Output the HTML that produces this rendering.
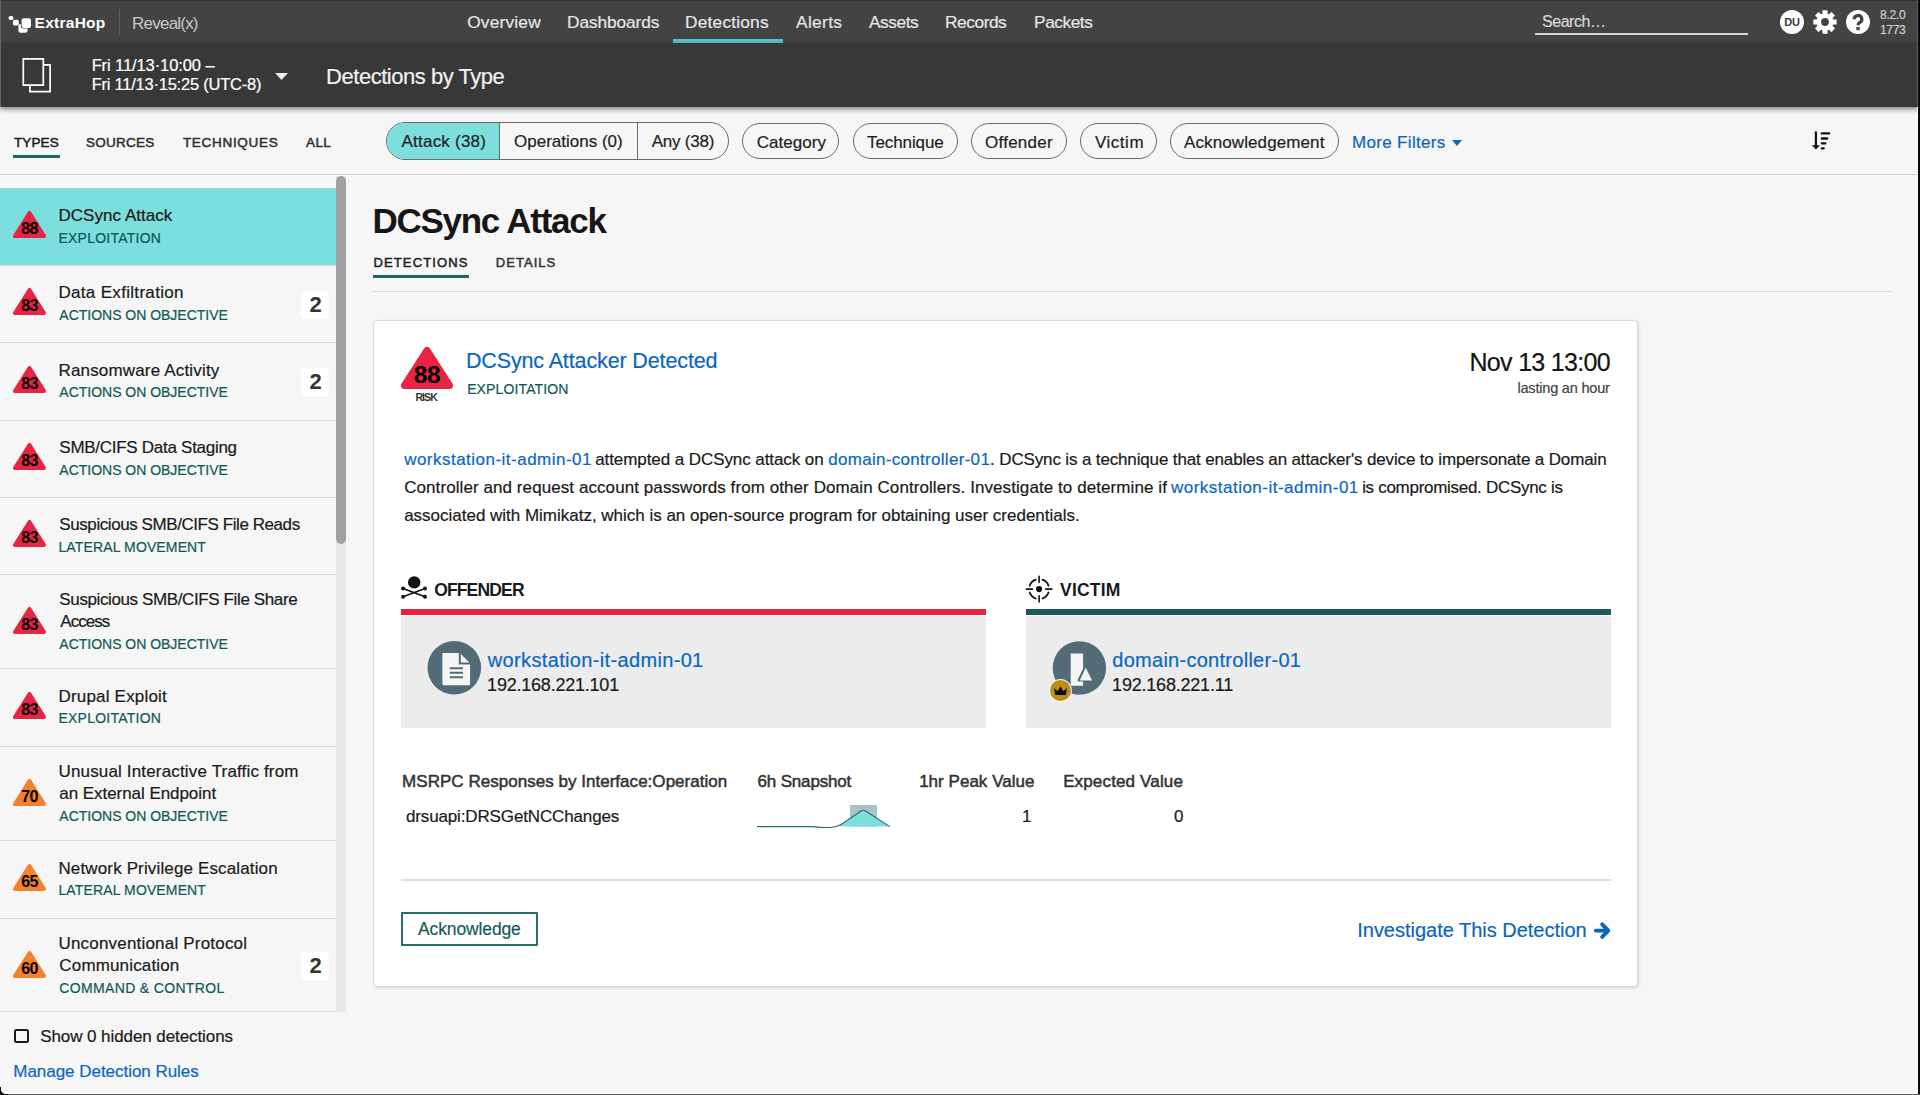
<!DOCTYPE html>
<html><head><meta charset="utf-8">
<style>
*{margin:0;padding:0;box-sizing:border-box}
html,body{width:1920px;height:1095px;overflow:hidden;background:#f6f6f6;font-family:"Liberation Sans",sans-serif;color:#222}
.a{position:absolute}
.t{position:absolute;white-space:nowrap;line-height:1;-webkit-text-stroke:0.2px currentColor}
.t[style*="bold"]{-webkit-text-stroke:0}
</style></head>
<body>
<div class="a" style="left:0px;top:0px;width:1920px;height:43px;background:#434343"></div>
<svg class="a" style="left:0;top:0" width="40" height="43" viewBox="0 0 40 43">
<rect x="8.7" y="15.9" width="4.6" height="4.2" rx="1.6" fill="#fff"/>
<rect x="13" y="19.8" width="5.8" height="5.8" rx="1.6" fill="#fff"/>
<rect x="18.4" y="24" width="9.2" height="8.8" rx="2.2" fill="#fff"/>
<rect x="20.8" y="17.6" width="11" height="11" rx="2.4" fill="#434343"/>
<rect x="21.6" y="18.2" width="9.4" height="9.7" rx="2.2" fill="#fff"/>
</svg>
<div class="t" id=logo style="left:34.54px;top:15.18px;font-size:15.5px;color:#fff;font-weight:bold;letter-spacing:0.266px">ExtraHop</div>
<div class="a" style="left:119px;top:9px;width:1px;height:26px;background:#5e5e5e"></div>
<div class="t" id=reveal style="left:132.1px;top:14.61px;font-size:17px;color:#c8c8c8;letter-spacing:-0.788px;-webkit-text-stroke:0">Reveal(x)</div>
<div class="t" id=navOverview style="left:467.18px;top:13.76px;font-size:17.3px;color:#e6e6e6;letter-spacing:0.206px">Overview</div>
<div class="t" id=navDashboards style="left:567.1px;top:13.76px;font-size:17.3px;color:#e6e6e6;letter-spacing:-0.1px">Dashboards</div>
<div class="t" id=navDetections style="left:685.1px;top:13.76px;font-size:17.3px;color:#e6e6e6;letter-spacing:0.2px">Detections</div>
<div class="t" id=navAlerts style="left:796.0px;top:13.76px;font-size:17.3px;color:#e6e6e6;letter-spacing:0.36px">Alerts</div>
<div class="t" id=navAssets style="left:869.0px;top:13.76px;font-size:17.3px;color:#e6e6e6;letter-spacing:-0.432px">Assets</div>
<div class="t" id=navRecords style="left:945.1px;top:13.76px;font-size:17.3px;color:#e6e6e6;letter-spacing:-0.45px">Records</div>
<div class="t" id=navPackets style="left:1034.1px;top:13.76px;font-size:17.3px;color:#e6e6e6;letter-spacing:-0.45px">Packets</div>
<div class="a" style="left:673px;top:39px;width:110px;height:4px;background:#55c6ca"></div>
<div class="t" id=search style="left:1542.0px;top:13.66px;font-size:16px;color:#d8d8d8;letter-spacing:-0.45px">Search…</div>
<div class="a" style="left:1535px;top:33px;width:213px;height:2px;background:#d6d6d6"></div>
<div class="a" style="left:1780px;top:10px;width:24px;height:24px;border-radius:50%;background:#fff;font-size:11px;font-weight:bold;color:#3a3a3a;text-align:center;line-height:24px;letter-spacing:-0.3px">DU</div>
<svg class="a" style="left:1812px;top:9px" width="26" height="26" viewBox="-13 -13 26 26">
<g fill="#fff"><circle r="8.6"/>
<rect x="-2.6" y="-11.7" width="5.2" height="23.4" rx="0.6"/>
<rect x="-2.6" y="-11.7" width="5.2" height="23.4" rx="0.6" transform="rotate(45)"/>
<rect x="-2.6" y="-11.7" width="5.2" height="23.4" rx="0.6" transform="rotate(90)"/>
<rect x="-2.6" y="-11.7" width="5.2" height="23.4" rx="0.6" transform="rotate(135)"/></g>
<circle r="3.9" fill="#434343"/>
</svg>
<svg class="a" style="left:1846px;top:10px" width="24" height="24" viewBox="0 0 24 24">
<circle cx="12" cy="12" r="12" fill="#fff"/>
<path d="M8.2 9.3a3.8 3.7 0 1 1 5.7 3.1c-1.2.8-1.9 1.3-1.9 2.9" stroke="#434343" stroke-width="3.2" fill="none"/>
<rect x="10.3" y="17" width="3.4" height="3.2" fill="#434343"/>
</svg>
<div class="t" id=ver1 style="left:1880.0px;top:9.14px;font-size:12px;color:#cfcfcf;letter-spacing:-0.27px">8.2.0</div>
<div class="t" id=ver2 style="left:1879.9px;top:23.64px;font-size:12px;color:#cfcfcf;letter-spacing:-0.3px">1773</div>
<div class="a" style="left:0px;top:43px;width:1920px;height:64px;background:#383838;box-shadow:0 2px 5px rgba(0,0,0,.5)"></div>
<svg class="a" style="left:0;top:43px" width="60" height="63" viewBox="0 43 60 63">
<path d="M29.9 64.8H50.1V91.6H29.9z" fill="none" stroke="#fff" stroke-width="1.7"/>
<path d="M23.3 58.8H43.3V85.1H23.3z" fill="#383838" stroke="#fff" stroke-width="1.7"/>
</svg>
<div class="t" id=date1 style="left:91.64px;top:57.43px;font-size:16.5px;color:#fff;letter-spacing:-0.09px">Fri 11/13·10:00 –</div>
<div class="t" id=date2 style="left:91.64px;top:75.73px;font-size:16.5px;color:#fff;letter-spacing:-0.229px">Fri 11/13·15:25 (UTC-8)</div>
<svg class="a" style="left:275px;top:73px" width="13" height="7" viewBox="0 0 13 7"><path d="M0 0h13L6.5 7z" fill="#eee"/></svg>
<div class="t" id=dbt style="left:326.1px;top:65.78px;font-size:22px;color:#f2f2f2;letter-spacing:-0.476px">Detections by Type</div>
<div class="a" style="left:0px;top:174px;width:1920px;height:1px;background:#d4d4d4"></div>
<div class="t" id=ftTYPES style="left:13.9px;top:135.57px;font-size:13.5px;color:#1e1e1e;-webkit-text-stroke:0.5px currentColor;letter-spacing:0.13px">TYPES</div>
<div class="t" id=ftSOURCES style="left:86.0px;top:135.57px;font-size:13.5px;color:#2e2e2e;-webkit-text-stroke:0.5px currentColor;letter-spacing:0.25px">SOURCES</div>
<div class="t" id=ftTECHNIQUES style="left:182.9px;top:135.57px;font-size:13.5px;color:#2e2e2e;-webkit-text-stroke:0.5px currentColor;letter-spacing:0.7px">TECHNIQUES</div>
<div class="t" id=ftALL style="left:306.0px;top:135.57px;font-size:13.5px;color:#2e2e2e;-webkit-text-stroke:0.5px currentColor;letter-spacing:0.4px">ALL</div>
<div class="a" style="left:13px;top:155px;width:47px;height:3px;background:#1f6765"></div>
<div class="a" style="left:386px;top:122px;width:343px;height:38px;border:1px solid #6a6a6a;border-radius:19px;overflow:hidden;background:#f6f6f6">
<div class="a" style="left:0;top:0;width:113px;height:36px;background:#7ddede;border-right:1px solid #6a6a6a"></div>
<div class="a" style="left:250px;top:0;width:1px;height:36px;background:#6a6a6a"></div>
</div>
<div class="t" id=pAttack style="left:401.54px;top:132.61px;font-size:17px;color:#1e1e1e;letter-spacing:0.216px">Attack (38)</div>
<div class="t" id=pOps style="left:514.0px;top:132.61px;font-size:17px;color:#1e1e1e">Operations (0)</div>
<div class="t" id=pAny style="left:651.72px;top:132.61px;font-size:17px;color:#1e1e1e;letter-spacing:-0.231px">Any (38)</div>
<div class="a" style="left:742px;top:123px;width:97px;height:36px;border:1px solid #6a6a6a;border-radius:18px"></div>
<div class="t" id=pCategory style="left:756.64px;top:134.01px;font-size:17px;color:#1e1e1e;letter-spacing:0.051px">Category</div>
<div class="a" style="left:853px;top:123px;width:105px;height:36px;border:1px solid #6a6a6a;border-radius:18px"></div>
<div class="t" id=pTechnique style="left:867.0px;top:134.01px;font-size:17px;color:#1e1e1e;letter-spacing:-0.09px">Technique</div>
<div class="a" style="left:971px;top:123px;width:96px;height:36px;border:1px solid #6a6a6a;border-radius:18px"></div>
<div class="t" id=pOffender style="left:985.0px;top:134.01px;font-size:17px;color:#1e1e1e;letter-spacing:0.257px">Offender</div>
<div class="a" style="left:1080px;top:123px;width:77px;height:36px;border:1px solid #6a6a6a;border-radius:18px"></div>
<div class="t" id=pVictim style="left:1094.9px;top:134.01px;font-size:17px;color:#1e1e1e;letter-spacing:0.54px">Victim</div>
<div class="a" style="left:1170px;top:123px;width:169px;height:36px;border:1px solid #6a6a6a;border-radius:18px"></div>
<div class="t" id=pAcknowledgement style="left:1184.0px;top:134.01px;font-size:17px;color:#1e1e1e;letter-spacing:0.103px">Acknowledgement</div>
<div class="t" id=more style="left:1352.1px;top:134.01px;font-size:17px;color:#0b66c1;letter-spacing:0.311px">More Filters</div>
<svg class="a" style="left:1452px;top:140px" width="10" height="6" viewBox="0 0 10 6"><path d="M0 0h10L5 6z" fill="#0b66c1"/></svg>
<svg class="a" style="left:1790px;top:120px" width="60" height="45" viewBox="1790 120 60 45">
<path d="M1815.9 132.3V147" stroke="#111" stroke-width="2.2" stroke-linecap="round"/>
<path d="M1812.4 145.6h7l-3.5 3.6z" fill="#111" stroke="#111" stroke-width="0.6" stroke-linejoin="round"/>
<path d="M1821.8 133.4h7.4M1821.8 138.5h5.4M1821.8 143.4h3.5M1821.8 148.4h1.9" stroke="#111" stroke-width="2.3" stroke-linecap="round"/>
</svg>
<div class="a" style="left:0px;top:188px;width:336px;height:77px;background:#7ddede"></div>
<div class="a" style="left:0px;top:265px;width:336px;height:1px;background:#dadada"></div>
<div class="t" id=s0t0 style="left:58.46px;top:207.31px;font-size:17px;color:#1a1a1a;letter-spacing:0.045px">DCSync Attack</div>
<div class="t" id=s0c style="left:58.46px;top:231.15px;font-size:14px;color:#0f5553;letter-spacing:0.245px">EXPLOITATION</div>
<svg class="a" style="left:13px;top:211.3px" width="33" height="27" viewBox="0 0 33 27"><polygon points="16.5,2.0 2.0,25.0 31.0,25.0" fill="#e92443" stroke="#e92443" stroke-width="4" stroke-linejoin="round"/></svg>
<div class="t" style="left:13px;width:33px;text-align:center;top:221.46px;font-size:16px;font-weight:bold;color:#000;letter-spacing:-0.7px">88</div>
<div class="a" style="left:0px;top:342px;width:336px;height:1px;background:#dadada"></div>
<div class="t" id=s1t0 style="left:58.46px;top:284.31px;font-size:17px;color:#1a1a1a;letter-spacing:0.315px">Data Exfiltration</div>
<div class="t" id=s1c style="left:59.36px;top:308.15px;font-size:14px;color:#0f5957;letter-spacing:-0.019px">ACTIONS ON OBJECTIVE</div>
<svg class="a" style="left:13px;top:288.3px" width="33" height="27" viewBox="0 0 33 27"><polygon points="16.5,2.0 2.0,25.0 31.0,25.0" fill="#e92443" stroke="#e92443" stroke-width="4" stroke-linejoin="round"/></svg>
<div class="t" style="left:13px;width:33px;text-align:center;top:298.46px;font-size:16px;font-weight:bold;color:#000;letter-spacing:-0.7px">83</div>
<div class="a" style="left:301px;top:291px;width:28px;height:28px;background:#fff;border-radius:3px"></div>
<div class="t" id=s1b style="left:309.48px;top:293.98px;font-size:22px;color:#333;font-weight:bold">2</div>
<div class="a" style="left:0px;top:420px;width:336px;height:1px;background:#dadada"></div>
<div class="t" id=s2t0 style="left:58.46px;top:361.61px;font-size:17px;color:#1a1a1a;letter-spacing:0.17px">Ransomware Activity</div>
<div class="t" id=s2c style="left:59.36px;top:385.45px;font-size:14px;color:#0f5957;letter-spacing:-0.019px">ACTIONS ON OBJECTIVE</div>
<svg class="a" style="left:13px;top:365.6px" width="33" height="27" viewBox="0 0 33 27"><polygon points="16.5,2.0 2.0,25.0 31.0,25.0" fill="#e92443" stroke="#e92443" stroke-width="4" stroke-linejoin="round"/></svg>
<div class="t" style="left:13px;width:33px;text-align:center;top:375.76px;font-size:16px;font-weight:bold;color:#000;letter-spacing:-0.7px">83</div>
<div class="a" style="left:301px;top:368px;width:28px;height:28px;background:#fff;border-radius:3px"></div>
<div class="t" id=s2b style="left:309.48px;top:371.38px;font-size:22px;color:#333;font-weight:bold">2</div>
<div class="a" style="left:0px;top:497px;width:336px;height:1px;background:#dadada"></div>
<div class="t" id=s3t0 style="left:59.36px;top:438.91px;font-size:17px;color:#1a1a1a;letter-spacing:-0.279px">SMB/CIFS Data Staging</div>
<div class="t" id=s3c style="left:59.36px;top:462.75px;font-size:14px;color:#0f5957;letter-spacing:-0.019px">ACTIONS ON OBJECTIVE</div>
<svg class="a" style="left:13px;top:442.9px" width="33" height="27" viewBox="0 0 33 27"><polygon points="16.5,2.0 2.0,25.0 31.0,25.0" fill="#e92443" stroke="#e92443" stroke-width="4" stroke-linejoin="round"/></svg>
<div class="t" style="left:13px;width:33px;text-align:center;top:453.06px;font-size:16px;font-weight:bold;color:#000;letter-spacing:-0.7px">83</div>
<div class="a" style="left:0px;top:574px;width:336px;height:1px;background:#dadada"></div>
<div class="t" id=s4t0 style="left:59.36px;top:516.31px;font-size:17px;color:#1a1a1a;letter-spacing:-0.428px">Suspicious SMB/CIFS File Reads</div>
<div class="t" id=s4c style="left:58.46px;top:540.15px;font-size:14px;color:#0f5957;letter-spacing:0.132px">LATERAL MOVEMENT</div>
<svg class="a" style="left:13px;top:520.3px" width="33" height="27" viewBox="0 0 33 27"><polygon points="16.5,2.0 2.0,25.0 31.0,25.0" fill="#e92443" stroke="#e92443" stroke-width="4" stroke-linejoin="round"/></svg>
<div class="t" style="left:13px;width:33px;text-align:center;top:530.46px;font-size:16px;font-weight:bold;color:#000;letter-spacing:-0.7px">83</div>
<div class="a" style="left:0px;top:668px;width:336px;height:1px;background:#dadada"></div>
<div class="t" id=s5t0 style="left:59.36px;top:590.81px;font-size:17px;color:#1a1a1a;letter-spacing:-0.385px">Suspicious SMB/CIFS File Share</div>
<div class="t" id=s5t1 style="left:60.26px;top:613.41px;font-size:17px;color:#1a1a1a;letter-spacing:-0.936px">Access</div>
<div class="t" id=s5c style="left:59.36px;top:637.35px;font-size:14px;color:#0f5957;letter-spacing:-0.019px">ACTIONS ON OBJECTIVE</div>
<svg class="a" style="left:13px;top:606.5px" width="33" height="27" viewBox="0 0 33 27"><polygon points="16.5,2.0 2.0,25.0 31.0,25.0" fill="#e92443" stroke="#e92443" stroke-width="4" stroke-linejoin="round"/></svg>
<div class="t" style="left:13px;width:33px;text-align:center;top:616.66px;font-size:16px;font-weight:bold;color:#000;letter-spacing:-0.7px">83</div>
<div class="a" style="left:0px;top:746px;width:336px;height:1px;background:#dadada"></div>
<div class="t" id=s6t0 style="left:58.46px;top:687.61px;font-size:17px;color:#1a1a1a;letter-spacing:0.194px">Drupal Exploit</div>
<div class="t" id=s6c style="left:58.46px;top:711.45px;font-size:14px;color:#0f5957;letter-spacing:0.245px">EXPLOITATION</div>
<svg class="a" style="left:13px;top:691.6px" width="33" height="27" viewBox="0 0 33 27"><polygon points="16.5,2.0 2.0,25.0 31.0,25.0" fill="#e92443" stroke="#e92443" stroke-width="4" stroke-linejoin="round"/></svg>
<div class="t" style="left:13px;width:33px;text-align:center;top:701.76px;font-size:16px;font-weight:bold;color:#000;letter-spacing:-0.7px">83</div>
<div class="a" style="left:0px;top:840px;width:336px;height:1px;background:#dadada"></div>
<div class="t" id=s7t0 style="left:58.46px;top:762.81px;font-size:17px;color:#1a1a1a;letter-spacing:0.163px">Unusual Interactive Traffic from</div>
<div class="t" id=s7t1 style="left:59.36px;top:785.41px;font-size:17px;color:#1a1a1a;letter-spacing:-0.057px">an External Endpoint</div>
<div class="t" id=s7c style="left:59.36px;top:809.35px;font-size:14px;color:#0f5957;letter-spacing:-0.019px">ACTIONS ON OBJECTIVE</div>
<svg class="a" style="left:13px;top:778.5px" width="33" height="27" viewBox="0 0 33 27"><polygon points="16.5,2.0 2.0,25.0 31.0,25.0" fill="#f7812b" stroke="#f7812b" stroke-width="4" stroke-linejoin="round"/></svg>
<div class="t" style="left:13px;width:33px;text-align:center;top:788.66px;font-size:16px;font-weight:bold;color:#000;letter-spacing:-0.7px">70</div>
<div class="a" style="left:0px;top:918px;width:336px;height:1px;background:#dadada"></div>
<div class="t" id=s8t0 style="left:58.46px;top:859.61px;font-size:17px;color:#1a1a1a;letter-spacing:0.14px">Network Privilege Escalation</div>
<div class="t" id=s8c style="left:58.46px;top:883.45px;font-size:14px;color:#0f5957;letter-spacing:0.132px">LATERAL MOVEMENT</div>
<svg class="a" style="left:13px;top:863.6px" width="33" height="27" viewBox="0 0 33 27"><polygon points="16.5,2.0 2.0,25.0 31.0,25.0" fill="#f7812b" stroke="#f7812b" stroke-width="4" stroke-linejoin="round"/></svg>
<div class="t" style="left:13px;width:33px;text-align:center;top:873.76px;font-size:16px;font-weight:bold;color:#000;letter-spacing:-0.7px">65</div>
<div class="a" style="left:0px;top:1011px;width:336px;height:1px;background:#dadada"></div>
<div class="t" id=s9t0 style="left:58.46px;top:934.81px;font-size:17px;color:#1a1a1a;letter-spacing:0.196px">Unconventional Protocol</div>
<div class="t" id=s9t1 style="left:59.36px;top:957.41px;font-size:17px;color:#1a1a1a;letter-spacing:0.15px">Communication</div>
<div class="t" id=s9c style="left:59.36px;top:981.35px;font-size:14px;color:#0f5957;letter-spacing:0.338px">COMMAND &amp; CONTROL</div>
<svg class="a" style="left:13px;top:950.5px" width="33" height="27" viewBox="0 0 33 27"><polygon points="16.5,2.0 2.0,25.0 31.0,25.0" fill="#f7812b" stroke="#f7812b" stroke-width="4" stroke-linejoin="round"/></svg>
<div class="t" style="left:13px;width:33px;text-align:center;top:960.66px;font-size:16px;font-weight:bold;color:#000;letter-spacing:-0.7px">60</div>
<div class="a" style="left:301px;top:952px;width:28px;height:28px;background:#fff;border-radius:3px"></div>
<div class="t" id=s9b style="left:309.48px;top:954.98px;font-size:22px;color:#333;font-weight:bold">2</div>
<div class="a" style="left:336px;top:176px;width:10px;height:835.5px;background:#e8e8e8"></div>
<div class="a" style="left:336px;top:176px;width:10px;height:368px;background:#a0a0a0;border-radius:5px"></div>
<div class="a" style="left:14px;top:1028.5px;width:14.5px;height:14.5px;border:2px solid #1a1a1a;border-radius:2.5px"></div>
<div class="t" id=show0 style="left:40.18px;top:1028.01px;font-size:17px;color:#1a1a1a;letter-spacing:-0.078px">Show 0 hidden detections</div>
<div class="t" id=manage style="left:13.32px;top:1063.11px;font-size:17px;color:#0b66c1;letter-spacing:-0.034px">Manage Detection Rules</div>
<div class="t" id=h1 style="left:372.38px;top:202.97px;font-size:35px;color:#161616;font-weight:bold;letter-spacing:-1.25px">DCSync Attack</div>
<div class="t" id=tabDet style="left:373.5px;top:255.90px;font-size:13px;color:#1e1e1e;-webkit-text-stroke:0.5px currentColor;letter-spacing:1.12px">DETECTIONS</div>
<div class="t" id=tabDetails style="left:495.82px;top:255.90px;font-size:13px;color:#333;-webkit-text-stroke:0.5px currentColor;letter-spacing:1.04px">DETAILS</div>
<div class="a" style="left:373px;top:275px;width:96px;height:3px;background:#1f6765"></div>
<div class="a" style="left:373px;top:291px;width:1518px;height:1px;background:#d9d9d9"></div>
<div class="a" style="left:373px;top:320px;width:1265px;height:667px;background:#fff;border:1px solid #dadada;border-radius:4px;box-shadow:1px 1px 3px rgba(0,0,0,.13)"></div>
<svg class="a" style="left:401px;top:347px" width="52" height="42" viewBox="0 0 52 42"><polygon points="26,3.5 3.5,38.5 48.5,38.5" fill="#e92443" stroke="#e92443" stroke-width="7" stroke-linejoin="round"/></svg>
<div class="t" style="left:401px;width:52px;text-align:center;top:362.86px;font-size:24.5px;font-weight:bold;color:#000;letter-spacing:-0.5px">88</div>
<div class="t" id=risk style="left:415.46px;top:392.01px;font-size:10.5px;color:#333;font-weight:bold;letter-spacing:-0.92px">RISK</div>
<div class="t" id=dTitle style="left:465.88px;top:351.30px;font-size:21.5px;color:#0b66c1;letter-spacing:-0.125px">DCSync Attacker Detected</div>
<div class="t" id=dCat style="left:467.14px;top:381.55px;font-size:14px;color:#0f5957;letter-spacing:0.131px">EXPLOITATION</div>
<div class="t" id=dDate style="left:1469.46px;top:349.84px;font-size:25px;color:#141414;letter-spacing:-0.682px">Nov 13 13:00</div>
<div class="t" id=dLast style="left:1517.46px;top:381.03px;font-size:14.5px;color:#444;letter-spacing:-0.193px">lasting an hour</div>
<div class="t" id=d0_0 style="left:404.18px;top:451.11px;font-size:17px;color:#0b66c1;letter-spacing:0.483px">workstation-it-admin-01</div>
<div class="t" id=d0_1 style="left:595.18px;top:451.11px;font-size:17px;color:#1a1a1a;letter-spacing:-0.077px"> attempted a DCSync attack on</div>
<div class="t" id=d0_2 style="left:828.18px;top:451.11px;font-size:17px;color:#0b66c1;letter-spacing:0.303px">domain-controller-01</div>
<div class="t" id=d0_3 style="left:990.1px;top:451.11px;font-size:17px;color:#1a1a1a;letter-spacing:-0.142px">. DCSync is a technique that enables an attacker&#39;s device to impersonate a Domain</div>
<div class="t" id=d1_0 style="left:404.18px;top:479.21px;font-size:17px;color:#1a1a1a;letter-spacing:0.079px">Controller and request account passwords from other Domain Controllers. Investigate to determine if</div>
<div class="t" id=d1_1 style="left:1171.0px;top:479.21px;font-size:17px;color:#0b66c1;letter-spacing:0.483px">workstation-it-admin-01</div>
<div class="t" id=d1_2 style="left:1362.14px;top:479.21px;font-size:17px;color:#1a1a1a;letter-spacing:-0.292px">is compromised. DCSync is</div>
<div class="t" id=d2_0 style="left:404.18px;top:507.01px;font-size:17px;color:#1a1a1a;letter-spacing:-0.012px">associated with Mimikatz, which is an open-source program for obtaining user credentials.</div>
<svg class="a" style="left:396px;top:570px" width="40" height="34" viewBox="396 570 40 34">
<circle cx="414.2" cy="582.4" r="6.2" fill="#111"/>
<path d="M403.1 588.5L425 596.7M403.1 596.7L425 588.5" stroke="#111" stroke-width="1.6"/>
<circle cx="403.1" cy="588.5" r="2" fill="#111"/><circle cx="425" cy="588.5" r="2" fill="#111"/>
<circle cx="403.1" cy="596.7" r="2" fill="#111"/><circle cx="425" cy="596.7" r="2" fill="#111"/>
</svg>
<div class="t" id=offHdr style="left:434.14px;top:581.69px;font-size:17.5px;color:#1a1a1a;font-weight:bold;letter-spacing:-0.834px">OFFENDER</div>
<div class="a" style="left:401px;top:609px;width:585px;height:6px;background:#e8233f"></div>
<div class="a" style="left:401px;top:616px;width:585px;height:112px;background:#ececec"></div>
<svg class="a" style="left:424px;top:636px" width="62" height="62" viewBox="424 636 62 62">
<circle cx="454.3" cy="667.7" r="26.8" fill="#526b76"/>
<path d="M442.4 654.2q0-1.2 1.2-1.2H458.8V664.6H470.1V684.1q0 1.2-1.2 1.2H443.6q-1.2 0-1.2-1.2z" fill="#f5f5f5"/>
<path d="M460.8 654.1L469.3 662.6H460.8z" fill="#f5f5f5"/>
<path d="M449.8 668.3H463M449.8 672.8H463M449.8 677.3H463" stroke="#526b76" stroke-width="2"/>
</svg>
<div class="t" id=offName style="left:487.82px;top:649.67px;font-size:20px;color:#0b66c1;letter-spacing:0.344px">workstation-it-admin-01</div>
<div class="t" id=offIp style="left:487.1px;top:675.56px;font-size:18px;color:#1a1a1a;letter-spacing:-0.219px">192.168.221.101</div>
<svg class="a" style="left:1020px;top:570px" width="40" height="36" viewBox="1020 570 40 36">
<circle cx="1039.1" cy="589.1" r="3.1" fill="#111"/>
<path d="M1039.1 576.3V582.5M1039.1 595.7V601.9M1026.3 589.1H1032.5M1045.7 589.1H1051.9" stroke="#111" stroke-width="1.6" stroke-linecap="round"/>
<g fill="none" stroke="#111" stroke-width="1.8" stroke-linecap="round">
<path d="M1029.7 585.7A10 10 0 0 1 1035.7 579.7"/>
<path d="M1042.5 579.7A10 10 0 0 1 1048.5 585.7"/>
<path d="M1048.5 592.5A10 10 0 0 1 1042.5 598.5"/>
<path d="M1035.7 598.5A10 10 0 0 1 1029.7 592.5"/>
</g>
</svg>
<div class="t" id=vicHdr style="left:1060.0px;top:581.69px;font-size:17.5px;color:#1a1a1a;font-weight:bold;letter-spacing:0.22px">VICTIM</div>
<div class="a" style="left:1026px;top:609px;width:585px;height:6px;background:#1b5a5a"></div>
<div class="a" style="left:1026px;top:616px;width:585px;height:112px;background:#ececec"></div>
<svg class="a" style="left:1044px;top:636px" width="68" height="68" viewBox="1044 636 68 68">
<circle cx="1079.4" cy="668" r="26.7" fill="#526b76"/>
<path d="M1070.7 653.4H1083.1V668.5L1077.8 679.5Q1077 681.5 1079 681.5H1083.1V685.7H1070.7z" fill="#f5f5f5"/>
<path d="M1085.8 667.7L1092.1 680.4H1079.7z" fill="#f5f5f5"/>
<circle cx="1060.5" cy="690.5" r="11.4" fill="#f4f6fa"/>
<circle cx="1060.5" cy="690.5" r="10.5" fill="#bb8e16"/>
<path d="M1054.2 688L1057.5 691.3L1060.4 686.6L1063.4 691.3L1066.8 688L1066 694.9H1055.1z" fill="#0a0a10"/>
</svg>
<div class="t" id=vicName style="left:1112.28px;top:649.67px;font-size:20px;color:#0b66c1;letter-spacing:0.275px">domain-controller-01</div>
<div class="t" id=vicIp style="left:1112.1px;top:675.56px;font-size:18px;color:#1a1a1a;letter-spacing:-0.208px">192.168.221.11</div>
<div class="t" id=th1 style="left:402.1px;top:772.61px;font-size:17px;color:#333;-webkit-text-stroke:0.5px currentColor;letter-spacing:0.029px">MSRPC Responses by Interface:Operation</div>
<div class="t" id=th2 style="left:757.5px;top:772.61px;font-size:17px;color:#333;-webkit-text-stroke:0.5px currentColor;letter-spacing:-0.162px">6h Snapshot</div>
<div class="t" id=th3 style="left:919.14px;top:772.61px;font-size:17px;color:#333;-webkit-text-stroke:0.5px currentColor;letter-spacing:0.028px">1hr Peak Value</div>
<div class="t" id=th4 style="left:1063.14px;top:772.61px;font-size:17px;color:#333;-webkit-text-stroke:0.5px currentColor;letter-spacing:0.152px">Expected Value</div>
<div class="t" id=tr1 style="left:405.96px;top:808.21px;font-size:17px;color:#1a1a1a;letter-spacing:-0.139px">drsuapi:DRSGetNCChanges</div>
<div class="t" id=tr2 style="left:1022.0px;top:808.21px;font-size:17px;color:#1a1a1a">1</div>
<div class="t" id=tr3 style="left:1174.0px;top:808.21px;font-size:17px;color:#1a1a1a">0</div>
<svg class="a" style="left:750px;top:800px" width="150" height="32" viewBox="750 800 150 32">
<rect x="850" y="805" width="27" height="21.6" fill="#aac2c5"/>
<path d="M839.5 826.6V825.6Q840.5 825 841.5 824.2L860.8 811.2Q863.3 809.4 865.8 811.2L889.8 826.6z" fill="#7ddede"/>
<path d="M757 826.6H812Q820 827.6 830 827.5Q836 827.4 841.5 824.2L860.8 811.2Q863.3 809.4 865.8 811.2L889.8 826.6" fill="none" stroke="#2f6b6b" stroke-width="1.1"/>
</svg>
<div class="a" style="left:401px;top:879px;width:1210px;height:2px;background:#dedede"></div>
<div class="a" style="left:401px;top:912px;width:137px;height:34px;border:2px solid #2c6c6b;border-radius:1px"></div>
<div class="t" id=ack style="left:418.0px;top:920.99px;font-size:17.5px;color:#145c5a;letter-spacing:-0.126px">Acknowledge</div>
<div class="t" id=inv style="left:1357.24px;top:920.27px;font-size:20px;color:#0b66c1;letter-spacing:-0.014px">Investigate This Detection</div>
<svg class="a" style="left:1592px;top:920px" width="20" height="20" viewBox="0 0 20 20"><path d="M3.8 10.6H15M10.2 4.3L16.3 10.6L10.2 16.9" stroke="#0b66c1" stroke-width="3.9" fill="none" stroke-linecap="round" stroke-linejoin="round"/></svg>
<div class="a" style="left:1917px;top:0px;width:1px;height:107px;background:#5c5c5c"></div>
<div class="a" style="left:0px;top:0px;width:1917px;height:1px;background:#333"></div>
<div class="a" style="left:0px;top:0px;width:1px;height:107px;background:#666"></div>
<div class="a" style="left:1917px;top:107px;width:1px;height:987px;background:#fdfdfd"></div>
<div class="a" style="left:1918px;top:0px;width:2px;height:1095px;background:#0a0a0a"></div>
<div class="a" style="left:0px;top:1093px;width:1917px;height:1px;background:#fdfdfd"></div>
<div class="a" style="left:0px;top:1094px;width:1920px;height:1px;background:#5a5a5a"></div>
<svg class="a" style="left:0;top:1087px" width="8" height="8" viewBox="0 0 8 8"><path d="M0 0V8H8V7H6A5 5 0 0 1 1 2V0z" fill="#0a0a0a"/><path d="M1 0V2A5 5 0 0 0 6 7H8V6H6A4 4 0 0 1 2 2V0z" fill="#fdfdfd"/></svg>
</body></html>
